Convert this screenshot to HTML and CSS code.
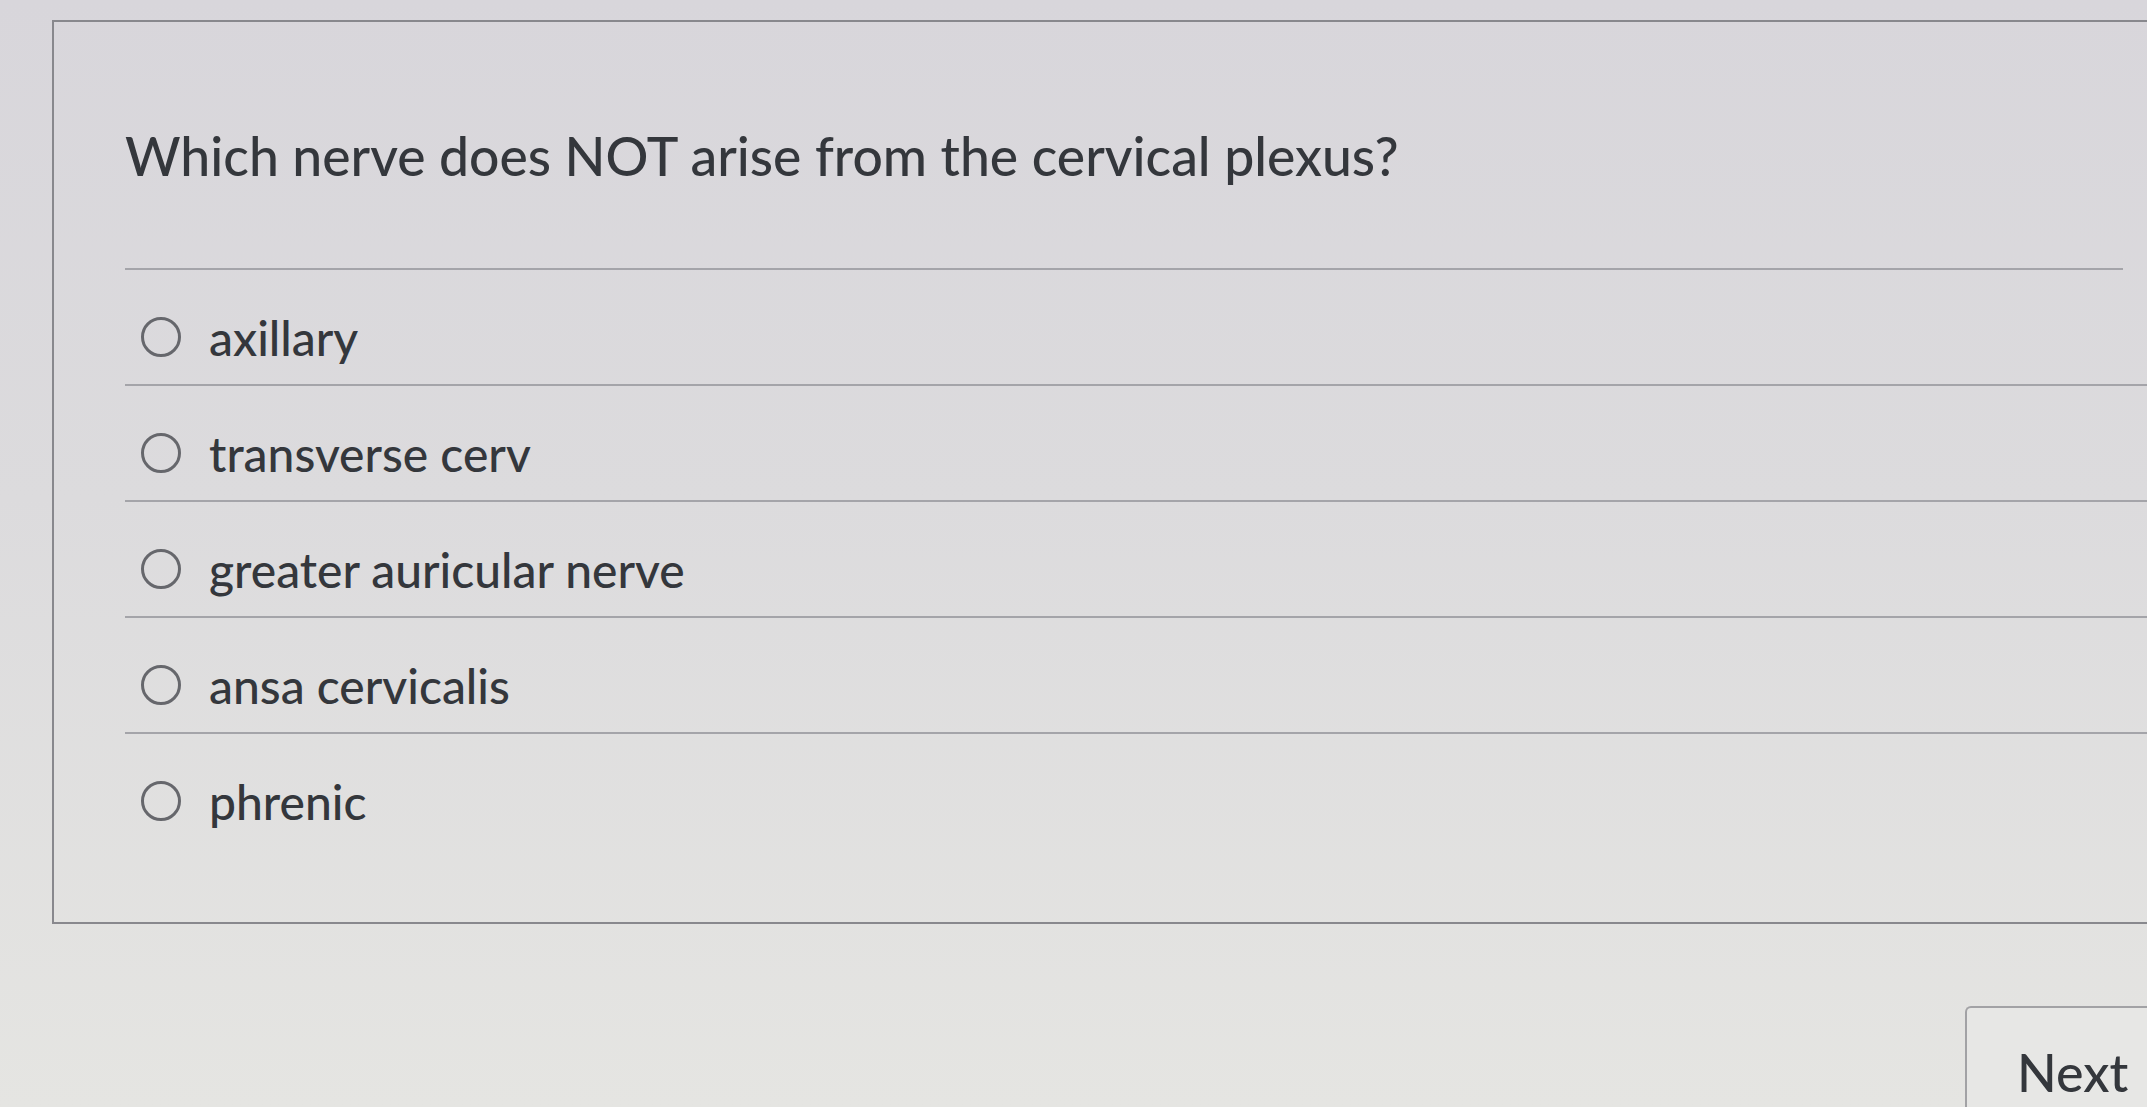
FILE: index.html
```html
<!DOCTYPE html>
<html lang="en">
<head>
<meta charset="utf-8">
<title>Quiz</title>
<link rel="stylesheet" href="styles.css">
</head>
<body>
<div class="page">
  <div class="card">
    <div class="question">Which nerve does NOT arise from the cervical plexus?</div>
    <ul class="options">
      <li class="option"><span class="radio"></span><span class="label">axillary</span></li>
      <li class="option"><span class="radio"></span><span class="label">transverse cerv</span></li>
      <li class="option"><span class="radio"></span><span class="label">greater auricular nerve</span></li>
      <li class="option"><span class="radio"></span><span class="label">ansa cervicalis</span></li>
      <li class="option last"><span class="radio"></span><span class="label">phrenic</span></li>
    </ul>
  </div>
  <div class="footer">
    <button class="next">Next</button>
  </div>
</div>
</body>
</html>
```

FILE: styles.css
```css
html, body {
  margin: 0;
  padding: 0;
  height: 100%;
  overflow: hidden;
}
body {
  background: linear-gradient(180deg, #d8d6db 0%, #dcdbdd 45%, #e5e5e2 100%);
  font-family: Lato, "Open Sans", sans-serif;
  color: #34373c;
}
.page {
  width: 100%;
  height: 100vh;
  overflow: hidden;
}
.card {
  margin: 20px 0 0 52px;
  border: 2px solid #88888d;
  border-right: none;
  padding: 0 0 74px 71px;
}
.question {
  height: 226px;
  padding-top: 20px;
  display: flex;
  align-items: center;
  font-size: 53.5px;
  font-weight: 500;
  border-bottom: 2px solid #a4a4a9;
  margin-right: 24px;
}
.options {
  list-style: none;
  margin: 0;
  padding: 0;
}
.option {
  height: 94px;
  padding-top: 20px;
  display: flex;
  align-items: center;
  border-bottom: 2px solid #a4a4a9;
  padding-left: 16px;
}
.option.last {
  border-bottom: none;
}
.radio {
  width: 34px;
  height: 34px;
  border: 3px solid #66676c;
  border-radius: 50%;
  flex: none;
}
.label {
  margin-left: 28px;
  font-size: 48px;
  font-weight: 500;
}
.footer {
  display: flex;
  justify-content: flex-end;
  align-items: flex-start;
  margin-top: 82px;
}
.next {
  display: block;
  width: 182px;
  border: 2px solid #a2a2a5;
  border-right: none;
  border-bottom: none;
  border-radius: 6px 0 0 0;
  background: #e7e7e5;
  font-family: Lato, "Open Sans", sans-serif;
  font-size: 52px;
  font-weight: 500;
  line-height: 62px;
  color: #34373c;
  text-align: left;
  padding: 33px 0 4px 50px;
}
```
